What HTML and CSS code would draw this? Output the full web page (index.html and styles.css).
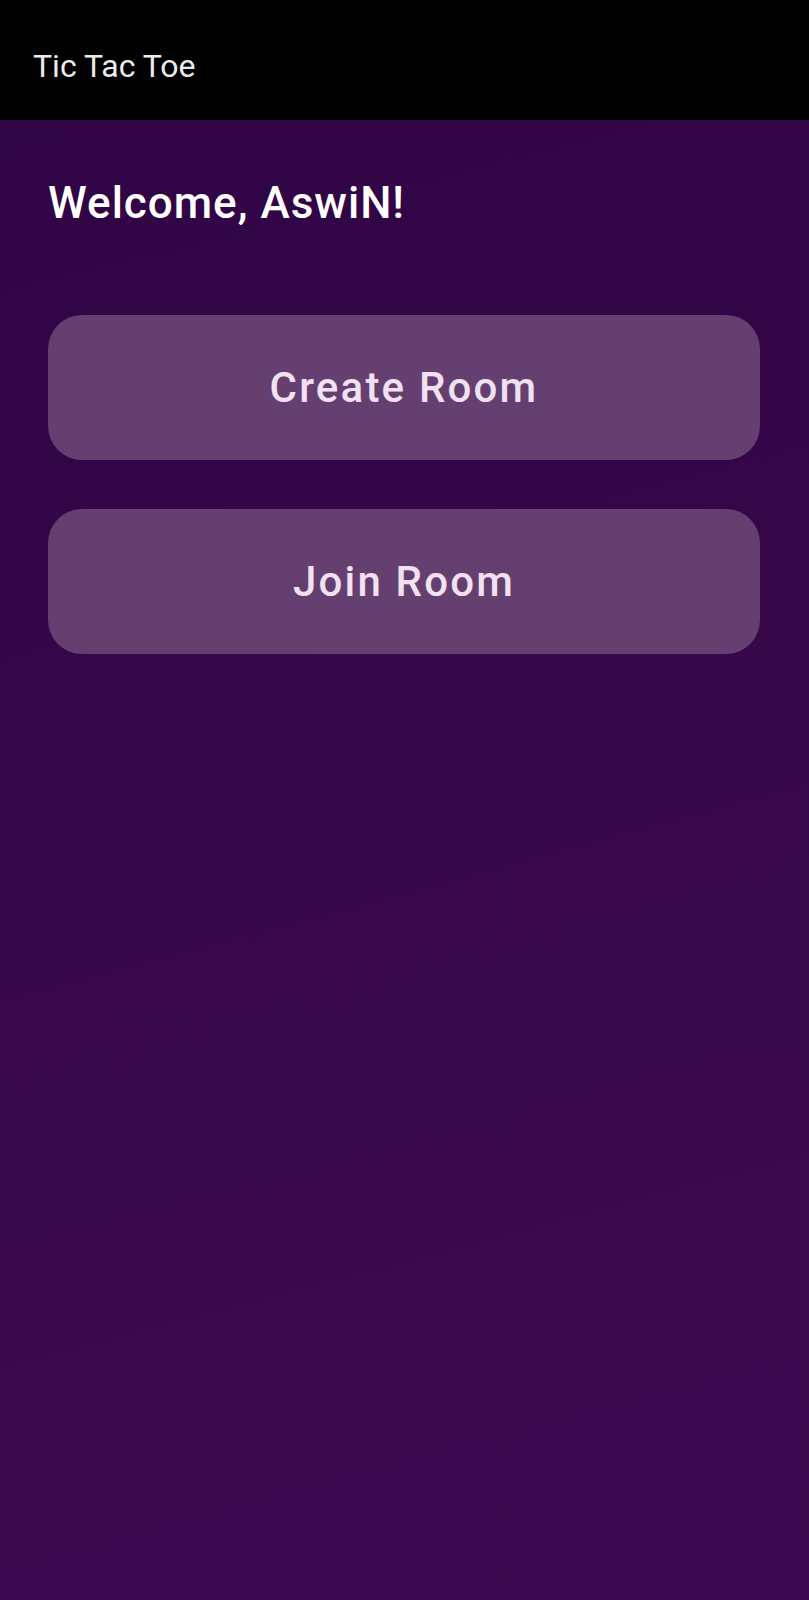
FILE: index.html
```html
<!DOCTYPE html>
<html>
<head>
<meta charset="utf-8">
<link rel="stylesheet" href="styles.css">
</head>
<body>
<header class="appbar"><span class="appbar-title">Tic Tac Toe</span></header>
<main class="content">
  <h1 class="welcome">Welcome, AswiN!</h1>
  <div class="actions">
    <button class="room-btn">Create Room</button>
    <button class="room-btn">Join Room</button>
  </div>
</main>
</body>
</html>
```
FILE: styles.css
```css
html, body {
  margin: 0;
  padding: 0;
  height: 100%;
}
body {
  font-family: Roboto, "Noto Sans", sans-serif;
  background: linear-gradient(165deg, #2f0444 0%, #360749 45%, #3d0a51 100%);
  display: flex;
  flex-direction: column;
  min-height: 1600px;
}
.appbar {
  height: 120px;
  background: #000;
  display: flex;
  align-items: center;
  padding-left: 33px;
  flex-shrink: 0;
}
.appbar-title {
  color: #ececec;
  font-size: 32px;
  font-weight: 400;
  position: relative;
  top: 6px;
}
.content {
  padding: 59px 49px 0 48px;
  flex: 1;
}
.welcome {
  margin: 0;
  color: #ffffff;
  font-size: 44px;
  line-height: 48px;
  font-weight: 500;
  letter-spacing: 1px;
}
.actions {
  margin-top: 88px;
  display: flex;
  flex-direction: column;
  gap: 49px;
}
.room-btn {
  height: 145px;
  width: 100%;
  border: none;
  border-radius: 34px;
  background: #653f70;
  color: #f1e1f3;
  font-family: Roboto, "Noto Sans", sans-serif;
  font-size: 42px;
  font-weight: 500;
  letter-spacing: 2.2px;
  display: flex;
  align-items: center;
  justify-content: center;
  padding: 0;
}
```
